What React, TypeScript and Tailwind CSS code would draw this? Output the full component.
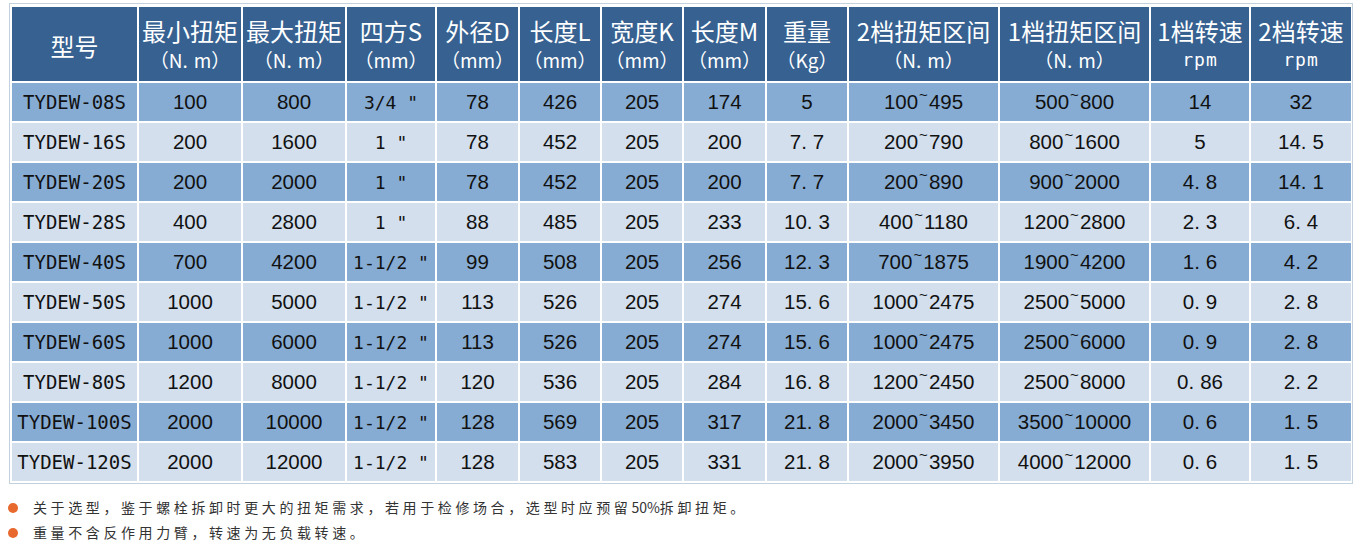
const cjk = "font-['Noto_Sans_CJK_SC','Noto_Sans',sans-serif]";
const mono = "font-['DejaVu_Sans_Mono','Liberation_Mono',monospace]";
const arial = "font-['Liberation_Sans',Arial,sans-serif]";

const cols = [
  { t: '型号' },
  { t: '最小扭矩', u: '（N.m）' },
  { t: '最大扭矩', u: '（N.m）' },
  { t: '四方S', u: '（mm）' },
  { t: '外径D', u: '（mm）' },
  { t: '长度L', u: '（mm）' },
  { t: '宽度K', u: '（mm）' },
  { t: '长度M', u: '（mm）' },
  { t: '重量', u: '（Kg）' },
  { t: '2档扭矩区间', u: '（N.m）' },
  { t: '1档扭矩区间', u: '（N.m）' },
  { t: '1档转速', u: 'rpm' },
  { t: '2档转速', u: 'rpm' },
];

const rows = [
  ['TYDEW-08S', '100', '800', '3/4 "', '78', '426', '205', '174', '5', '100~495', '500~800', '14', '32'],
  ['TYDEW-16S', '200', '1600', '1 "', '78', '452', '205', '200', '7.7', '200~790', '800~1600', '5', '14.5'],
  ['TYDEW-20S', '200', '2000', '1 "', '78', '452', '205', '200', '7.7', '200~890', '900~2000', '4.8', '14.1'],
  ['TYDEW-28S', '400', '2800', '1 "', '88', '485', '205', '233', '10.3', '400~1180', '1200~2800', '2.3', '6.4'],
  ['TYDEW-40S', '700', '4200', '1-1/2 "', '99', '508', '205', '256', '12.3', '700~1875', '1900~4200', '1.6', '4.2'],
  ['TYDEW-50S', '1000', '5000', '1-1/2 "', '113', '526', '205', '274', '15.6', '1000~2475', '2500~5000', '0.9', '2.8'],
  ['TYDEW-60S', '1000', '6000', '1-1/2 "', '113', '526', '205', '274', '15.6', '1000~2475', '2500~6000', '0.9', '2.8'],
  ['TYDEW-80S', '1200', '8000', '1-1/2 "', '120', '536', '205', '284', '16.8', '1200~2450', '2500~8000', '0.86', '2.2'],
  ['TYDEW-100S', '2000', '10000', '1-1/2 "', '128', '569', '205', '317', '21.8', '2000~3450', '3500~10000', '0.6', '1.5'],
  ['TYDEW-120S', '2000', '12000', '1-1/2 "', '128', '583', '205', '331', '21.8', '2000~3950', '4000~12000', '0.6', '1.5'],
];

// periods get a wider gap and the tilde sits high, as in the source sheet
function fmt(s: string) {
  return s.split(/([.~])/).map((p, i) => {
    if (p === '.') return <span key={i} className="mr-[6px]">.</span>;
    if (p === '~') return <span key={i} className="relative -top-[7px] text-[15px] mx-[1px]">~</span>;
    return <span key={i}>{p}</span>;
  });
}

function Cell({ v, c, bg }: { v: string; c: number; bg: string }) {
  let font = `${arial} text-[20.5px]`;
  if (c === 0) font = `${mono} text-[19px]`;
  if (c === 3) font = `${mono} text-[18px]`;
  return (
    <div className={`h-[38px] flex items-center justify-center whitespace-nowrap text-[#111] ${bg} ${font}`}>
      {c === 0 || c === 3 ? v : fmt(v)}
    </div>
  );
}

export default function App() {
  return (
    <div className="bg-white w-[1363px] h-[559px] overflow-hidden">
      <div className="ml-[9px] mt-[3px] w-fit border border-[#c3d0de] pl-[2px] pt-[3px] pr-[1px] pb-[2px]">
        <div className="grid grid-cols-[125px_102px_102px_88px_81px_80px_80px_81px_80px_149px_149px_98px_100px] gap-[2px]">
          {cols.map((h, i) => (
            <div key={i} className="h-[74px] bg-[#366191] text-white flex flex-col items-center justify-center whitespace-nowrap pt-[2px]">
              <div className={`${cjk} text-[24px] leading-[29px]`}>{h.t}</div>
              {h.u && (
                h.u === 'rpm' ? (
                  <div className={`${mono} text-[18px] leading-[29px] tracking-[1px]`}>rpm</div>
                ) : (
                  <div className={`${cjk} text-[19px] leading-[29px]`}>{fmt(h.u)}</div>
                )
              )}
            </div>
          ))}
          {rows.map((r, ri) =>
            r.map((v, c) => (
              <Cell key={`${ri}-${c}`} v={v} c={c} bg={ri % 2 === 0 ? 'bg-[#86acd4]' : 'bg-[#d3dfed]'} />
            ))
          )}
        </div>
      </div>

      <div className={`mt-[11px] pl-[8px] ${cjk} text-[14px] text-[#333] tracking-[3.6px]`}>
        <div className="flex items-center gap-[15px] leading-[25px]">
          <span className="w-[10px] h-[10px] rounded-full bg-[#e8692d] shrink-0" />
          <span>关于选型，鉴于螺栓拆卸时更大的扭矩需求，若用于检修场合，选型时应预留<span className="tracking-normal">50%</span>拆卸扭矩。</span>
        </div>
        <div className="flex items-center gap-[15px] leading-[25px]">
          <span className="w-[10px] h-[10px] rounded-full bg-[#e8692d] shrink-0" />
          <span>重量不含反作用力臂，转速为无负载转速。</span>
        </div>
      </div>
    </div>
  );
}
